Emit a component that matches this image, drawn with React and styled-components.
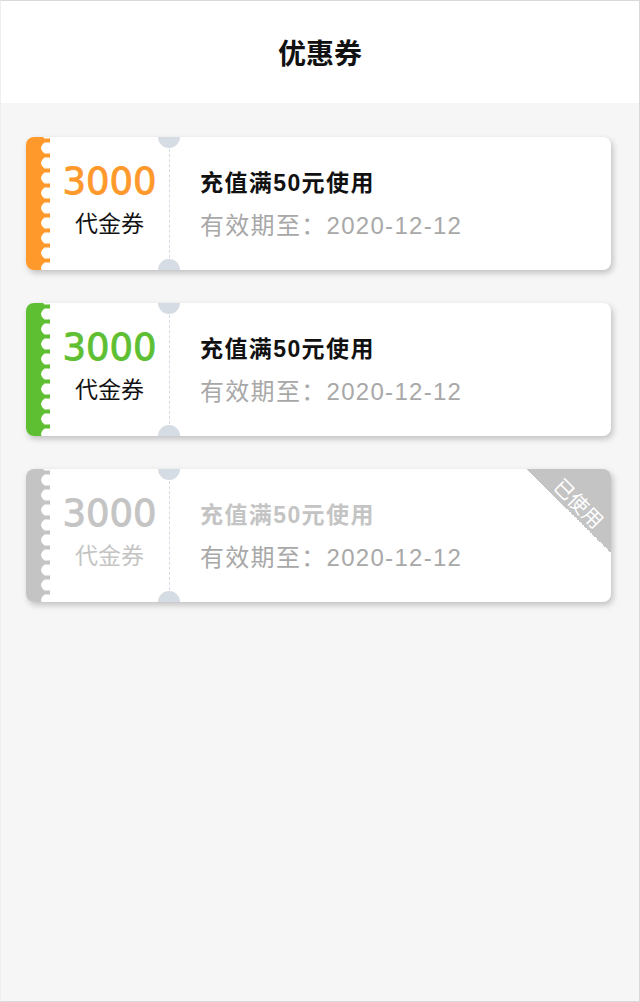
import React from 'react';
import styled, { createGlobalStyle } from 'styled-components';

const GlobalStyle = createGlobalStyle`
  html, body {
    margin: 0;
    padding: 0;
    background: #fff;
  }
  body {
    font-family: "Liberation Sans", "Noto Sans CJK SC", sans-serif;
  }
`;

const Page = styled.div`
  box-sizing: border-box;
  width: 640px;
  height: 1002px;
  border: 1px solid #d9d9d9;
  border-left-color: #eee;
  background: #f6f6f6;
  display: flex;
  flex-direction: column;
`;

const Header = styled.header`
  height: 102px;
  background: #fff;
  display: flex;
  align-items: center;
  justify-content: center;
  font-size: 28px;
  font-weight: 700;
  color: #111;
  font-family: "Noto Sans CJK SC", sans-serif;
`;

const List = styled.div`
  display: flex;
  flex-direction: column;
  gap: 33px;
  padding: 34px 28px 0 25px;
`;

const Card = styled.div`
  position: relative;
  display: flex;
  height: 133px;
  background: #fff;
  border-radius: 8px;
  overflow: hidden;
  box-shadow: 2px 3px 6px rgba(0, 0, 0, 0.22);
`;

const Strip = styled.div`
  width: 24px;
  flex-shrink: 0;
  background-color: ${(p) => p.color};
  background-image: radial-gradient(circle at 21px 7.5px, #fff 5.5px, transparent 6px);
  background-size: 24px 15px;
  background-position: 0 3.5px;
  background-repeat: repeat-y;
`;

const Stub = styled.div`
  width: 119px;
  flex-shrink: 0;
  display: flex;
  flex-direction: column;
  align-items: center;
  justify-content: center;
  padding-bottom: 10px;
`;

const Amount = styled.div`
  font-family: "DejaVu Sans", sans-serif;
  font-size: 37px;
  font-weight: 400;
  -webkit-text-stroke: 0.9px ${(p) => p.color};
  line-height: 44px;
  color: ${(p) => p.color};
`;

const Kind = styled.div`
  font-family: "Noto Sans CJK SC", sans-serif;
  font-size: 23px;
  line-height: 32px;
  margin-top: 2px;
  color: ${(p) => (p.muted ? '#c4c4c4' : '#111')};
`;

const Divider = styled.div`
  position: relative;
  width: 0;
  border-left: 1px dashed #d5dbe2;
  margin: 12px 0;
`;

const Notch = styled.span`
  position: absolute;
  left: -12px;
  width: 22px;
  height: 22px;
  border-radius: 50%;
  background: #d6dce3;
  ${(p) => (p.bottom ? 'bottom: -23px;' : 'top: -23px;')}
`;

const Info = styled.div`
  flex: 1;
  display: flex;
  flex-direction: column;
  justify-content: center;
  padding-left: 30px;
  padding-top: 2px;
  font-family: "Liberation Sans", "Noto Sans CJK SC", sans-serif;
`;

const Title = styled.div`
  font-size: 23px;
  font-weight: 700;
  line-height: 32px;
  letter-spacing: 1.4px;
  color: ${(p) => (p.muted ? '#c4c4c4' : '#111')};
`;

const Expiry = styled.div`
  font-size: 24px;
  line-height: 34px;
  margin-top: 10px;
  color: #a8a8a8;
  letter-spacing: 1.3px;
`;

const Corner = styled.div`
  position: absolute;
  top: 0;
  right: 0;
  width: 84px;
  height: 84px;
  background: linear-gradient(to bottom left, #c4c4c4 50%, transparent 50%);
`;

const CornerText = styled.span`
  position: absolute;
  top: 22px;
  right: -4px;
  width: 72px;
  text-align: center;
  transform: rotate(45deg);
  font-family: "Noto Sans CJK SC", sans-serif;
  font-size: 20px;
  line-height: 24px;
  color: #fff;
`;

const coupons = [
  { amount: '3000', kind: '代金券', title: '充值满50元使用', expiry: '有效期至：2020-12-12', color: '#ff992c' },
  { amount: '3000', kind: '代金券', title: '充值满50元使用', expiry: '有效期至：2020-12-12', color: '#5fbf33' },
  { amount: '3000', kind: '代金券', title: '充值满50元使用', expiry: '有效期至：2020-12-12', color: '#c4c4c4', used: true },
];

export default function App() {
  return (
    <>
      <GlobalStyle />
      <Page>
        <Header>优惠券</Header>
        <List>
          {coupons.map((c, i) => (
            <Card key={i}>
              <Strip color={c.color} />
              <Stub>
                <Amount color={c.color}>{c.amount}</Amount>
                <Kind muted={c.used}>{c.kind}</Kind>
              </Stub>
              <Divider>
                <Notch />
                <Notch bottom />
              </Divider>
              <Info>
                <Title muted={c.used}>{c.title}</Title>
                <Expiry>{c.expiry}</Expiry>
              </Info>
              {c.used && (
                <Corner>
                  <CornerText>已使用</CornerText>
                </Corner>
              )}
            </Card>
          ))}
        </List>
      </Page>
    </>
  );
}
